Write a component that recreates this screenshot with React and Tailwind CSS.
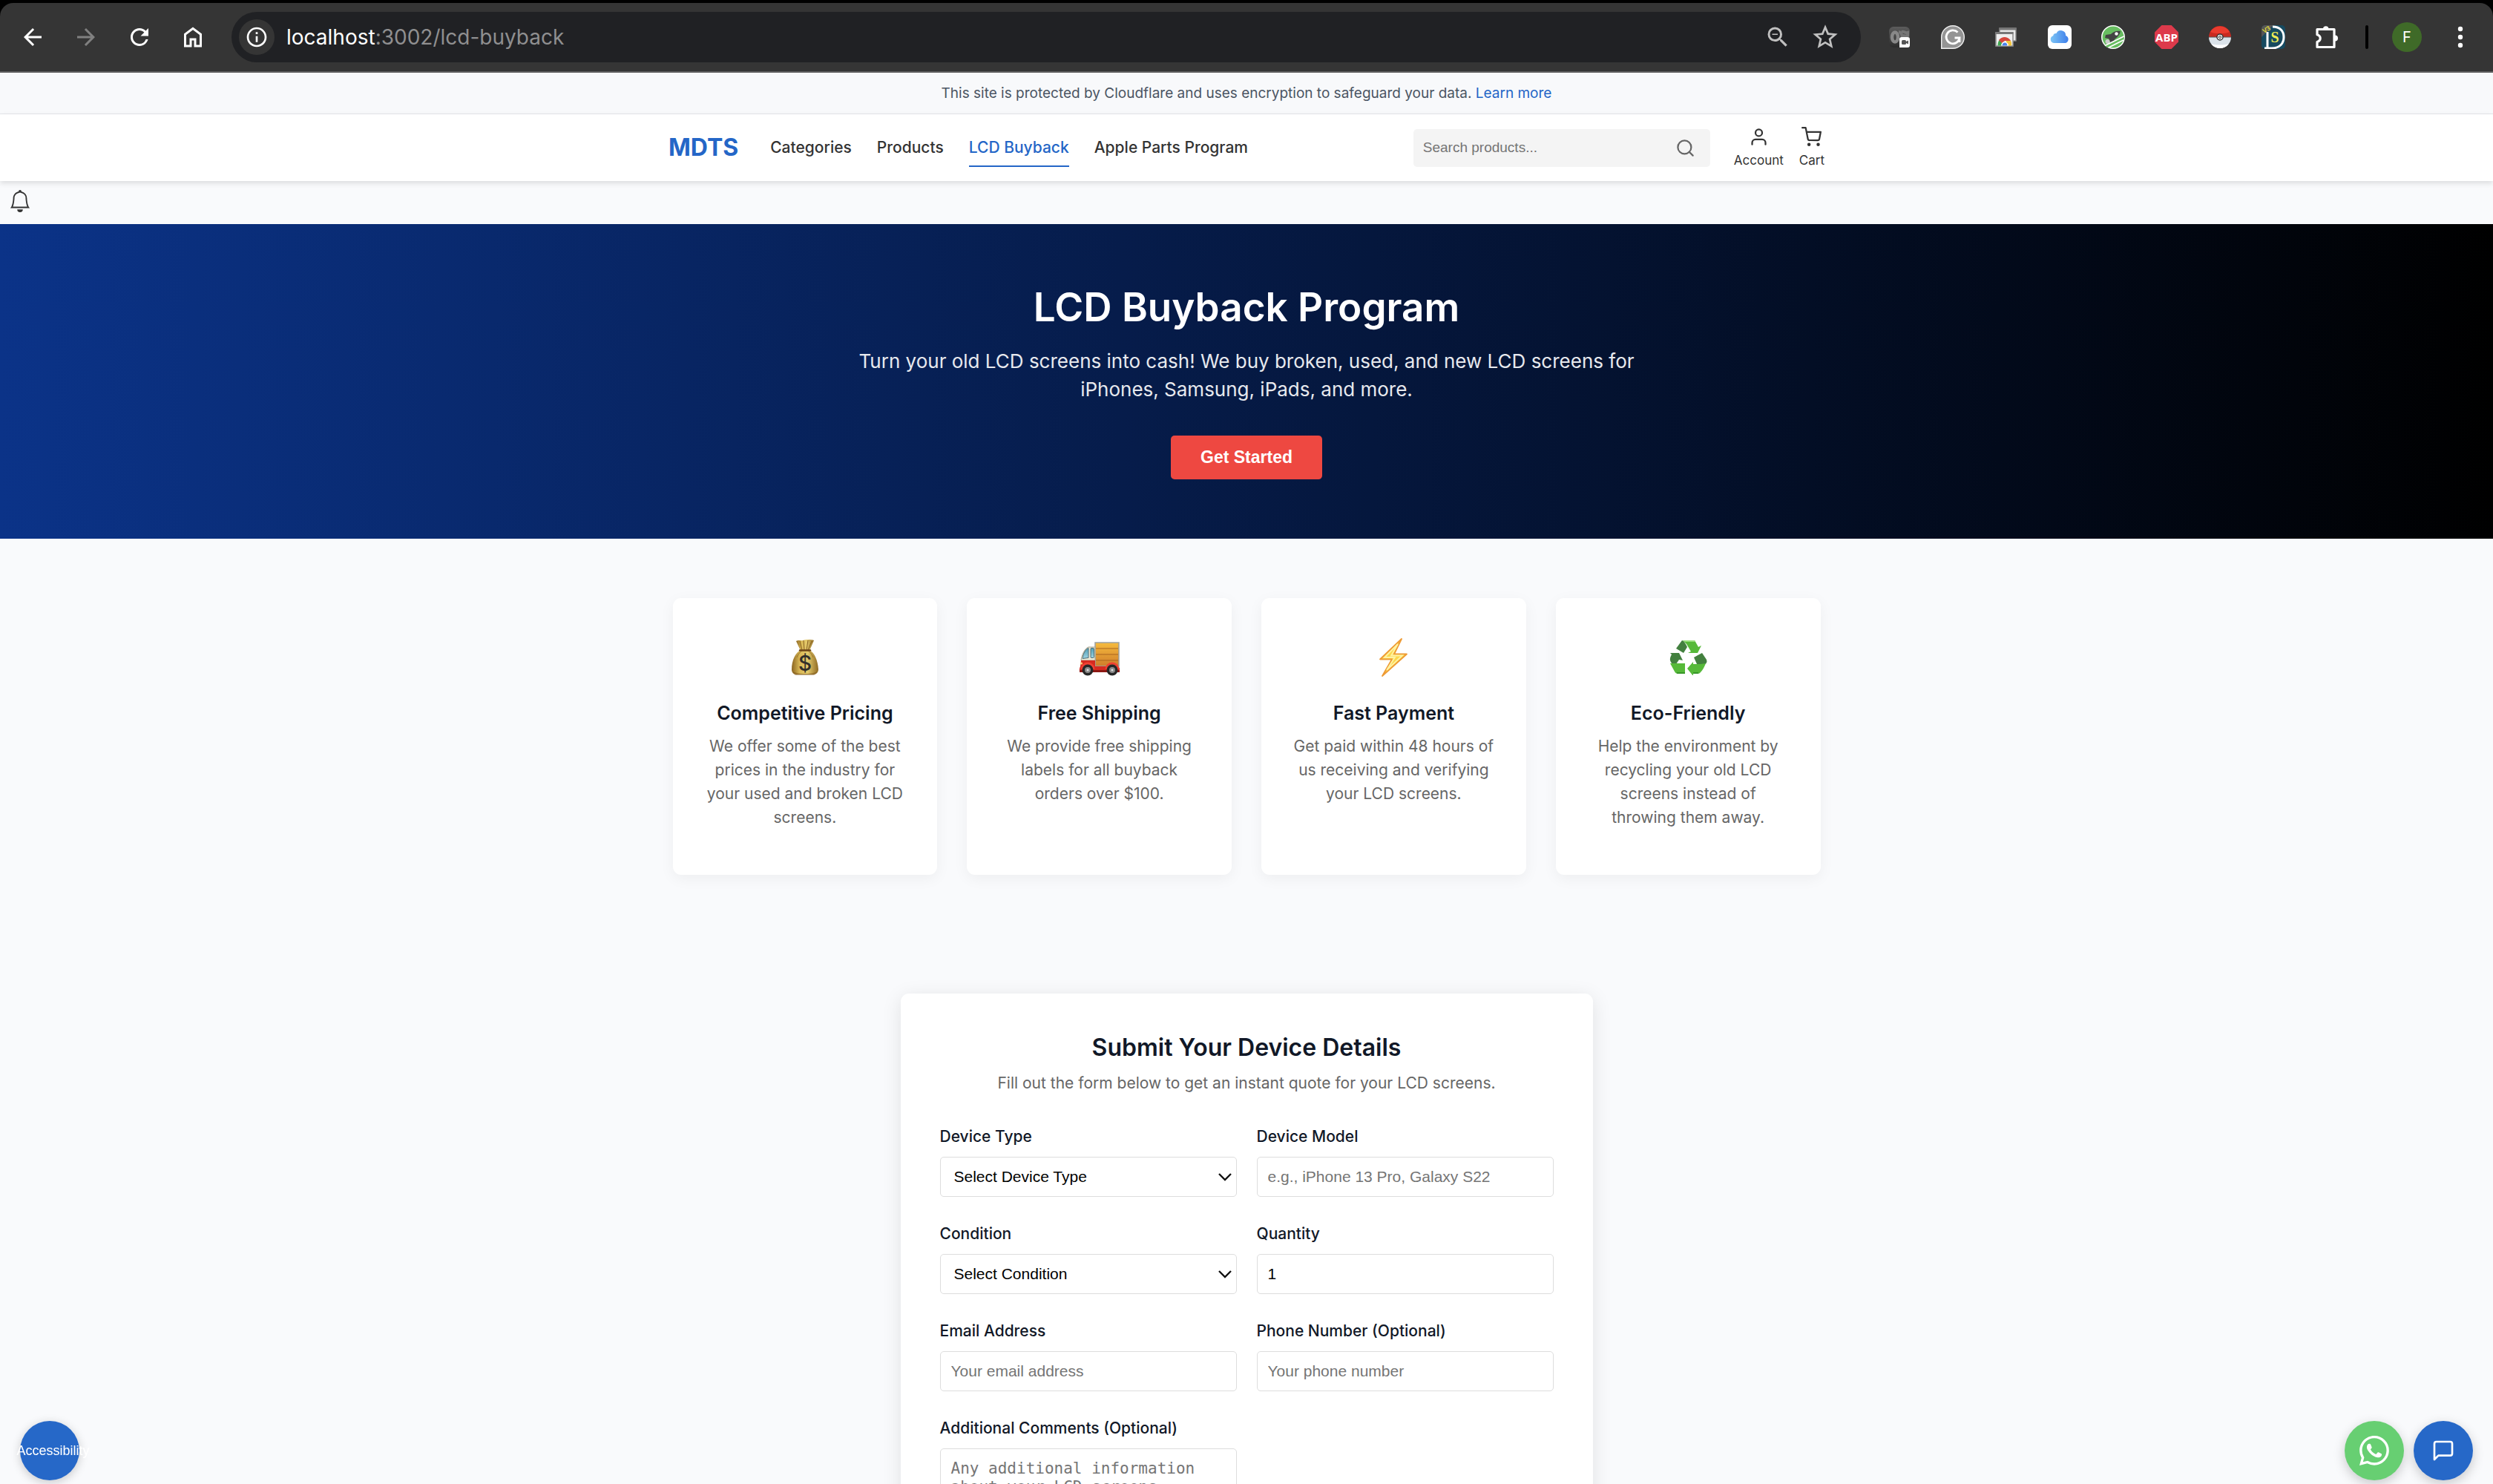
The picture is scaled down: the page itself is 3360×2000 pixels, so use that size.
import React from "react";
import { MdArrowBack, MdArrowForward, MdRefresh, MdInfoOutline, MdZoomOut, MdStarBorder } from "react-icons/md";
import { FiSearch, FiUser, FiShoppingCart, FiMessageSquare } from "react-icons/fi";
import { BsBell, BsWhatsapp } from "react-icons/bs";

const HomeIcon = () => (
  <svg viewBox="0 -960 960 960" className="size-9" fill="currentColor">
    <path d="M240-200h120v-240h240v240h120v-360L480-740 240-560v360Zm-80 80v-480l320-240 320 240v480H520v-240h-80v240H160Z" />
  </svg>
);

const Puzzle = () => (
  <svg viewBox="0 0 32 32" className="size-8 overflow-visible" fill="none" stroke="#fff" strokeWidth="3.2" strokeLinejoin="round">
    <path d="M3 5.500h23V29.500H3v-7c5.600-1.600 5.600-8.200 0-9.800z" />
    <path d="M11 5a3.700 3.700 0 1 1 7.400 0z" fill="#fff" stroke="none" />
    <path d="M27 13.500a4 4 0 1 1 0 8z" fill="#fff" stroke="none" />
  </svg>
);

const CameraTool = () => (
  <svg viewBox="0 0 32 32" className="size-8">
    <defs>
      <linearGradient id="cam" x1="0" y1="0" x2="0" y2="1"><stop stopColor="#5c5c5c" /><stop offset="1" stopColor="#2c2c2c" /></linearGradient>
    </defs>
    <rect x="2" y="2" width="28" height="28" rx="6" fill="url(#cam)" />
    <path d="M15 9c4 0 4 4 5 8M19 9c4-1 5 2 8 1v4c-3 1-4 0-6 0" fill="none" stroke="#777" strokeWidth="4" />
    <ellipse cx="10" cy="16" rx="4" ry="6.500" fill="none" stroke="#888" strokeWidth="4.500" />
    <path d="M16 19a3 3 0 0 1 3-3h8a3 3 0 0 1 3 3v8a3 3 0 0 1-3 3H16z" fill="#fff" />
    <rect x="19" y="20" width="6" height="6" rx="1.500" fill="#555" />
    <path d="M25 22l3-1.500v5L25 24z" fill="#555" />
  </svg>
);

const Grammar = () => (
  <svg viewBox="0 0 32 32" className="size-8">
    <path d="M.7 31.300V16A15.300 15.300 0 1 1 16 31.300z" fill="#949494" stroke="#efefef" strokeWidth="1.400" />
    <path d="M22.500 9.500A9 9 0 1 0 25 17h-6.500M25 16.500v6.500" fill="none" stroke="#fff" strokeWidth="2.800" />
  </svg>
);

const Windows = () => (
  <svg viewBox="0 0 32 32" className="size-8">
    <rect x="7" y="4" width="22" height="17" fill="#e8e8e8" stroke="#8a8a8a" strokeWidth="1.400" />
    <rect x="6.500" y="3.500" width="23" height="3" fill="#787878" />
    <rect x="2" y="10" width="23" height="18" fill="#efefef" stroke="#909090" strokeWidth="1.600" />
    <rect x="1.500" y="9" width="24" height="3" fill="#787878" />
    <path d="M4.500 27.500c0-4 1-6 2.500-8l5 7v1z" fill="#3fa650" />
    <path d="M6 20a9.500 9.500 0 0 1 16 1h-8l-4 3z" fill="#d5473c" />
    <path d="M16 21h6c1.200 2 1.200 4.500 1 6.500h-7z" fill="#f3c43c" />
    <path d="M9 27.500a5 5 0 0 1 10 0z" fill="#fff" />
    <path d="M10.800 27.500a3.300 3.300 0 1 1 6.400 0z" fill="#4a82ec" />
  </svg>
);

const Cloud = () => (
  <svg viewBox="0 0 32 32" className="size-8">
    <defs>
      <linearGradient id="cloud"><stop stopColor="#7cc4f5" /><stop offset="1" stopColor="#3f7fea" /></linearGradient>
    </defs>
    <rect width="32" height="32" rx="6" fill="#fff" />
    <path d="M8 24a5 5 0 0 1-.8-9.700 4 4 0 0 1 4.300-3.300 6.600 6.600 0 0 1 12.600 3A5.300 5.300 0 0 1 24 24z" fill="url(#cloud)" />
  </svg>
);

const Rocket = () => (
  <svg viewBox="0 0 32 32" className="size-8">
    <circle cx="16" cy="16" r="15.200" fill="#67bd60" stroke="#fff" strokeWidth="1.500" />
    <path d="M26 8c-6-1-10 1-13 4l-7 1-1 4 5 1 2 4 1 5 4-2 1-6c4-3 7-6 8-11z" fill="#444" />
    <circle cx="20.500" cy="11.500" r="2.200" fill="#fff" />
    <circle cx="8.500" cy="22" r="3" fill="#ccc" />
    <path d="M4 27L31 16l-1 5L8 30z" fill="#67bd60" />
    <path d="M5 27.500L30.500 15M10 30l20-10" stroke="#fff" strokeWidth="1.800" />
  </svg>
);

const AdStop = () => (
  <svg viewBox="0 0 32 32" className="size-8">
    <path d="M9.400 0h13.200L32 9.400v13.200L22.600 32H9.400L0 22.600V9.400z" fill="#dd3a4b" />
    <text x="16" y="22" textAnchor="middle" fontSize="15" fontWeight="700" fill="#fff" fontFamily="Open Sans, sans-serif">ABP</text>
  </svg>
);

const Ball = () => (
  <svg viewBox="0 0 32 32" className="size-8">
    <path d="M1 16a15 15 0 0 1 30 0z" fill="#c92a20" />
    <path d="M3 9a15 15 0 0 1 26 0c-6 3-20 3-26 0z" fill="#ea3b2e" />
    <path d="M1 16a15 15 0 0 0 30 0z" fill="#dbe3ea" />
    <path d="M4 25a15 15 0 0 0 24 0c-6 2-18 2-24 0z" fill="#fff" />
    <path d="M1 16h30" stroke="#555" strokeWidth="1" />
    <circle cx="16" cy="16" r="4" fill="#fff" stroke="#333" strokeWidth="1.500" />
    <circle cx="16" cy="16" r="1.600" fill="none" stroke="#333" strokeWidth="1" />
  </svg>
);

const Dollar = () => (
  <svg viewBox="0 0 32 32" className="size-8">
    <rect width="32" height="32" rx="5" fill="#164a60" />
    <path d="M0 16V5a5 5 0 0 1 5-5h11z" fill="#565656" />
    <path d="M8 9v22M4 31h10c11 0 16-7 16-15S25 2 15 2" fill="none" stroke="#fff" strokeWidth="3" />
    <text x="18" y="23" textAnchor="middle" fontSize="20" fontWeight="700" fill="#ecec54" fontFamily="Liberation Serif, serif">S</text>
    <text x="2" y="10" fontSize="9" fontWeight="700" fill="#e0da3c" fontFamily="Liberation Sans, sans-serif" transform="rotate(-30 5 8)">V3</text>
  </svg>
);

const extensions = [CameraTool, Grammar, Windows, Cloud, Rocket, AdStop, Ball, Dollar, Puzzle];

function BrowserBar() {
  return (
    <div className="shrink-0 bg-black pt-1">
      <div className="flex h-[94px] items-center rounded-t-[18px] border-b-2 border-[#5f5f5f] bg-[#353535] py-2 pr-6 pl-[26px] text-white">
        <div className="flex items-center gap-9">
          <button aria-label="Back"><MdArrowBack className="size-9" /></button>
          <button aria-label="Forward" className="text-[#808080]"><MdArrowForward className="size-9" /></button>
          <button aria-label="Reload"><MdRefresh className="size-9" /></button>
          <button aria-label="Home"><HomeIcon /></button>
        </div>
        <div className="ml-[34px] flex h-[68px] grow items-center rounded-full bg-[#202124] pr-7 pl-[10px]">
          <button aria-label="Site information" className="flex size-12 items-center justify-center rounded-full bg-[#353535]">
            <MdInfoOutline className="size-8" />
          </button>
          <p className="ml-4 grow text-[28px] text-[#8f8f90]"><span className="text-white">localhost</span>:3002/lcd-buyback</p>
          <button aria-label="Zoom" className="text-[#c0c0c0]"><MdZoomOut className="size-9" /></button>
          <button aria-label="Bookmark" className="ml-[26px] text-[#c0c0c0]"><MdStarBorder className="size-10" /></button>
        </div>
        <div className="ml-9 flex items-center gap-10">
          {extensions.map((Icon, i) => (
            <button key={i} aria-label={"Extension " + (i + 1)}><Icon /></button>
          ))}
        </div>
        <div className="ml-9 h-8 w-1 rounded bg-black" />
        <button className="ml-8 size-10 rounded-full bg-[#3f6a28] text-xl">F</button>
        <button aria-label="Menu" className="ml-8 flex w-10 items-center justify-center">
          <svg viewBox="0 0 8 32" className="h-8 w-2" fill="#fff">
            <circle cx="4" cy="5" r="3.2" /><circle cx="4" cy="16" r="3.2" /><circle cx="4" cy="27" r="3.2" />
          </svg>
        </button>
      </div>
    </div>
  );
}

const MoneyBag = () => (
  <svg viewBox="0 0 40 50" className="h-[50px] w-10">
    <defs>
      <linearGradient id="bag"><stop stopColor="#8b6420" /><stop offset=".3" stopColor="#d9b956" /><stop offset=".6" stopColor="#e4ca6c" /><stop offset="1" stopColor="#8f6a22" /></linearGradient>
    </defs>
    <path d="M8 3c4-2 6 0 9-1s4-1 7-1 6 0 8 1l-6 14H14z" fill="url(#bag)" />
    <path d="M13 3l3 12M18 2l1 13M24 2l-2 13M29 3l-5 12" stroke="#8a6224" strokeWidth="1" />
    <path d="M14 15h12c7 4 11 14 12 26 0 5-4 7-7 7H9c-4 0-7-2-7-7 0-12 5-22 12-26z" fill="url(#bag)" />
    <path d="M9 25c2-5 5-8 7-9M31 25c-2-5-5-8-7-9" stroke="#9a7329" strokeWidth="1" fill="none" />
    <path d="M4 44c5 4 27 4 32 0 0 3-3 5-6 5H9c-3 0-5-2-5-5z" fill="#7b541a" opacity=".5" />
    <path d="M13 15.500h14" stroke="#6d4618" strokeWidth="2.500" strokeLinecap="round" />
    <text x="20" y="43" textAnchor="middle" fontSize="28" fontWeight="500" fill="#33302a" fontFamily="Inter, sans-serif">$</text>
  </svg>
);

const Truck = () => (
  <svg viewBox="0 0 56 46" className="mt-1 h-[46px] w-14">
    <defs>
      <linearGradient id="box" x1="0" y1="0" x2="0" y2="1"><stop stopColor="#f6bb3d" /><stop offset="1" stopColor="#cf7d2b" /></linearGradient>
      <linearGradient id="glass" x1="0" y1="0" x2="0" y2="1"><stop stopColor="#4e9db6" /><stop offset="1" stopColor="#9fd4e2" /></linearGradient>
    </defs>
    <rect x="22" y="1" width="32" height="32" fill="url(#box)" stroke="#9da1a3" strokeWidth="1.500" />
    <path d="M23 9h30M23 17h30M23 25h30" stroke="#a9641f" strokeWidth="1.200" />
    <path d="M22 7H13C8 9 4 17 3 25h19z" fill="#ece6d3" stroke="#aaa590" />
    <path d="M13 8.500c-4 1-7 7-8 14l8-1z" fill="url(#glass)" stroke="#4b6e78" />
    <rect x="16" y="8.500" width="4.500" height="13" rx="1" fill="url(#glass)" stroke="#4b6e78" />
    <path d="M3 25h19v8h30l3 2v6H2c-2-3-1-5 0-8z" fill="#d62a20" />
    <path d="M1 38h54v3H1z" fill="#8d1813" />
    <path d="M4 37a8 8 0 0 1 16 0M37 37a8 8 0 0 1 16 0" fill="none" stroke="#f04032" strokeWidth="3" />
    {[12, 45].map((x) => (
      <g key={x}><circle cx={x} cy="38" r="7.500" fill="#272727" /><circle cx={x} cy="38" r="4" fill="#8b8b8b" /><circle cx={x} cy="38" r="1.500" fill="#ddd" /></g>
    ))}
    <circle cx="3.500" cy="29" r="1.500" fill="#ffd37a" />
  </svg>
);

const Bolt = () => (
  <svg viewBox="0 0 38 54" className="h-[54px] w-[38px]">
    <path d="M30 2L1 29.500h16L4 52l33-29.500H20z" fill="#fcd84c" stroke="#ee9b35" strokeWidth="1.800" strokeLinejoin="round" />
    <path d="M25 9L7 27h14L10 44l21-19.500H16z" fill="none" stroke="#fff2a3" strokeWidth="1.800" />
  </svg>
);

const Recycle = () => (
  <svg viewBox="0 0 52 48" className="h-12 w-[52px]">
    <path d="M19 1h16l5 9 4-2-5 10H26l4-2-6-10z" fill="#56b939" />
    <path d="M18 1c3 1 5 5 7 9l-5 8-10-6z" fill="#43803f" />
    <path d="M2 18h12l5 10-5-1-4 6H5c-4-5-4-7-1-13z" fill="#43803f" />
    <path d="M2 32h20v14h-9c-3 0-4-1-5-3z" fill="#56b939" />
    <path d="M45 18l6 9c1 3 0 5-2 6H38l-4-9z" fill="#43803f" />
    <path d="M50 32c-2 5-4 9-7 12-1 1-2 2-4 2h-6v3l-8-10 8-9v3h10z" fill="#56b939" />
    <path d="M19 1h16l1 2H22z" fill="#9be07f" />
    <path d="M11 45h11M33 45h7" stroke="#2f8a24" strokeWidth="1.500" />
  </svg>
);

const features = [
  { Icon: MoneyBag, title: "Competitive Pricing", text: "We offer some of the best prices in the industry for your used and broken LCD screens." },
  { Icon: Truck, title: "Free Shipping", text: "We provide free shipping labels for all buyback orders over $100." },
  { Icon: Bolt, title: "Fast Payment", text: "Get paid within 48 hours of us receiving and verifying your LCD screens." },
  { Icon: Recycle, title: "Eco-Friendly", text: "Help the environment by recycling your old LCD screens instead of throwing them away." },
];

function Header() {
  const link = "flex h-[52px] items-center border-b-2 border-transparent pt-[2px]";
  return (
    <header className="relative z-10 bg-white shadow-[0_3px_7px_rgba(0,0,0,0.12)]">
      <div className="mx-auto flex h-[90px] max-w-[1600px] items-center px-[21px]">
        <a href="#home" className="text-[32px] font-bold text-[#2466c7]">MDTS</a>
        <nav className="ml-[43px] flex items-center gap-[34px] text-[21px] font-medium text-[#333]">
          <a href="#categories" className={link}>Categories</a>
          <a href="#products" className={link}>Products</a>
          <a href="#buyback" className="flex h-[52px] items-center border-b-2 border-[#2466c7] pt-[2px] text-[#2466c7]">LCD Buyback</a>
          <a href="#apple" className={link}>Apple Parts Program</a>
        </nav>
        <div className="ml-auto flex h-[51px] w-[400px] items-center rounded-[5px] bg-[#f4f4f4] pr-5 pl-[13px] font-['Liberation_Sans',sans-serif]">
          <input aria-label="Search products" placeholder="Search products..." className="min-w-0 grow bg-transparent text-[19px] outline-none placeholder:text-[#757575]" />
          <button aria-label="Search" className="text-[#666]"><FiSearch className="size-[27px]" /></button>
        </div>
        <div className="ml-8 flex gap-[21px] text-[17px] leading-6 text-[#333]">
          <a href="#account" className="flex flex-col items-center gap-[6px]"><FiUser className="size-[27px]" />Account</a>
          <a href="#cart" className="flex flex-col items-center gap-[6px]"><FiShoppingCart className="size-[27px]" />Cart</a>
        </div>
      </div>
    </header>
  );
}

const control = "w-full rounded-[5px] border border-[#ddd] bg-white font-['Liberation_Sans',sans-serif] text-[21px] text-black outline-none placeholder:text-[#757575]";
const inputBox = control + " px-[14px] py-[10px] leading-8";

function Field({ id, label, children }) {
  return (
    <div className="flex flex-col gap-[11px]">
      <label htmlFor={id} className="text-[21px] leading-8 font-medium text-[#111827]">{label}</label>
      {children}
    </div>
  );
}

function SelectBox({ id, text }) {
  return (
    <div className="relative">
      <select id={id} className={control + " appearance-none px-[18px] py-[10px] leading-8"}><option>{text}</option></select>
      <svg viewBox="0 0 18 12" className="pointer-events-none absolute top-1/2 right-[7px] h-3 w-[18px] -translate-y-1/2" fill="none" stroke="#111" strokeWidth="2.4">
        <path d="M1 2l8 8 8-8" />
      </svg>
    </div>
  );
}

export default function App() {
  return (
    <div className="flex h-screen flex-col overflow-hidden bg-[#f9fafc] font-['Inter',sans-serif]">
      <BrowserBar />
      <div className="min-h-0 grow overflow-hidden">
        <div className="border-b border-[#e5e7eb] bg-[#f8f9fb] py-[13px] text-center text-[19px] leading-[29px] text-[#4b5563]">
          This site is protected by Cloudflare and uses encryption to safeguard your data. <a href="#learn" className="text-[#2466c7]">Learn more</a>
        </div>
        <Header />
        <div className="flex h-[58px] items-center px-3 pb-1">
          <button aria-label="Notifications" className="text-[#333]"><BsBell className="size-[30px]" /></button>
        </div>
        <section className="bg-[linear-gradient(90deg,#0b3388,#000)] px-6 py-20 text-center">
          <h1 className="text-[53px] leading-[64px] font-semibold text-white">LCD Buyback Program</h1>
          <p className="mx-auto mt-[22px] max-w-[1067px] text-[26px] leading-[38px] text-[#e7e9ee]">
            Turn your old LCD screens into cash! We buy broken, used, and new LCD screens for iPhones, Samsung, iPads, and more.
          </p>
          <button className="mt-[43px] rounded-[5px] bg-[#ee4841] px-10 py-4 font-['Liberation_Sans',sans-serif] text-[23px] leading-[27px] font-bold text-white">Get Started</button>
        </section>
        <section className="mx-auto grid max-w-[1547px] grid-cols-4 gap-10 py-20">
          {features.map(({ Icon, title, text }) => (
            <article key={title} className="rounded-[11px] bg-white px-[42px] pt-10 pb-[61px] text-center shadow-[0_5px_20px_rgba(0,0,0,0.05)]">
              <div className="flex h-20 items-center justify-center"><Icon /></div>
              <h2 className="mt-5 text-[25px] leading-[30px] font-semibold text-[#111827]">{title}</h2>
              <p className="mt-[14px] text-[21px] leading-8 text-[#666]">{text}</p>
            </article>
          ))}
        </section>
        <section className="pt-20">
          <form className="mx-auto max-w-[933px] rounded-[11px] bg-white px-[53px] pt-[54px] pb-[53px] shadow-[0_5px_27px_rgba(0,0,0,0.1)]">
            <h2 className="text-center text-[32px] leading-[38px] font-semibold text-[#111827]">Submit Your Device Details</h2>
            <p className="mt-[13px] text-center text-[21px] leading-8 text-[#666]">Fill out the form below to get an instant quote for your LCD screens.</p>
            <div className="mt-10 grid grid-cols-2 gap-x-[27px] gap-y-[34px]">
              <Field id="type" label="Device Type"><SelectBox id="type" text="Select Device Type" /></Field>
              <Field id="model" label="Device Model"><input id="model" placeholder="e.g., iPhone 13 Pro, Galaxy S22" className={inputBox} /></Field>
              <Field id="condition" label="Condition"><SelectBox id="condition" text="Select Condition" /></Field>
              <Field id="quantity" label="Quantity"><input id="quantity" defaultValue="1" className={inputBox} /></Field>
              <Field id="email" label="Email Address"><input id="email" type="email" placeholder="Your email address" className={inputBox} /></Field>
              <Field id="phone" label="Phone Number (Optional)"><input id="phone" type="tel" placeholder="Your phone number" className={inputBox} /></Field>
              <Field id="comments" label="Additional Comments (Optional)">
                <textarea id="comments" rows="4" placeholder="Any additional information about your LCD screens..." className="w-full resize-none rounded-[5px] border border-[#ddd] bg-white px-[14px] py-[14px] font-['DejaVu_Sans_Mono',monospace] text-[21px] leading-[25px] outline-none placeholder:text-[#757575]" />
              </Field>
            </div>
          </form>
        </section>
      </div>
      <button className="fixed bottom-[5px] left-[27px] flex size-20 items-center justify-center rounded-full bg-[#2668c8] pl-[9px] font-['Liberation_Sans',sans-serif] text-[18px] text-white shadow-[0_3px_13px_rgba(0,0,0,0.2)]">
        <span>Accessibility</span>
      </button>
      <div className="fixed right-[27px] bottom-[5px] flex gap-[13px] text-white">
        <button aria-label="WhatsApp" className="flex size-20 items-center justify-center rounded-full bg-[#67cf72] shadow-[0_5px_16px_rgba(0,0,0,0.2)]"><BsWhatsapp className="size-10" /></button>
        <button aria-label="Chat" className="flex size-20 items-center justify-center rounded-full bg-[#2668c8] shadow-[0_5px_16px_rgba(0,0,0,0.2)]"><FiMessageSquare className="size-8" /></button>
      </div>
    </div>
  );
}
